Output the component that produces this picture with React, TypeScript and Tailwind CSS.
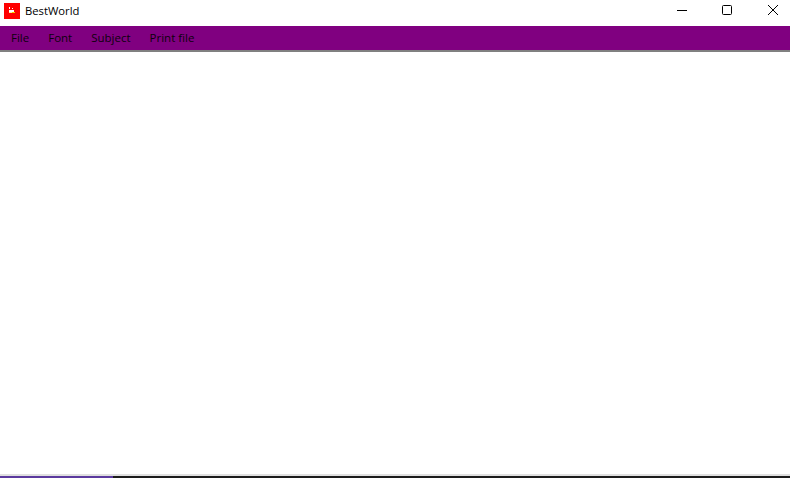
const menus = ["File", "Font", "Subject", "Print file"];

export default function App() {
  return (
    <div className="flex h-[478px] w-[790px] flex-col overflow-hidden bg-white font-['Open_Sans',sans-serif] text-black">
      {/* Title bar */}
      <div className="flex h-[26px] shrink-0 items-center justify-between">
        <div className="flex items-center gap-[5px] pb-[4px] pl-[4px]">
          <svg width="16" height="16" viewBox="0 0 16 16" className="block">
            <rect width="16" height="16" fill="#ff0000" />
            <rect x="5" y="4" width="1" height="2" fill="#fff" />
            <rect x="8" y="5" width="1" height="1" fill="#fff" />
            <rect x="5" y="7" width="5" height="2" fill="#fff" />
            <rect x="5" y="9" width="3" height="1" fill="#ffe9a0" />
            <rect x="8" y="9" width="3" height="1" fill="#f5d000" />
          </svg>
          <span className="text-[11.25px] leading-none">BestWorld</span>
        </div>
        <div className="flex pb-[6px]">
          <div className="flex w-[46px] justify-center">
            <svg width="10" height="10" viewBox="0 0 10 10" className="block">
              <path d="M0 5.5h10" stroke="#000" strokeWidth="1" />
            </svg>
          </div>
          <div className="flex w-[44px] justify-center">
            <svg width="10" height="10" viewBox="0 0 10 10" className="block">
              <rect x="0.5" y="0.5" width="9" height="9" rx="1" fill="none" stroke="#000" strokeWidth="1" />
            </svg>
          </div>
          <div className="flex w-[41px] justify-center pl-[7px]">
            <svg width="10" height="10" viewBox="0 0 10 10" className="block">
              <path d="M0 0l10 10M10 0l-10 10" stroke="#000" strokeWidth="1" />
            </svg>
          </div>
        </div>
      </div>

      {/* Menu bar */}
      <div className="flex h-[24px] shrink-0 items-center gap-[19px] bg-[#800080] pb-[1px] pl-[11px] text-[11.5px] text-[#0d000d]">
        {menus.map((m) => (
          <span key={m} className="leading-none">
            {m}
          </span>
        ))}
      </div>
      <div className="h-[2px] shrink-0 bg-[#808080]" />

      {/* Empty client area */}
      <div className="flex-1 bg-white" />

      {/* Window bottom edge and desktop behind it */}
      <div className="h-[2px] shrink-0 bg-[#e0e0e0]" />
      <div className="flex h-[2px] shrink-0">
        <div className="w-[113px] bg-[#5b3a9e]" />
        <div className="flex-1 bg-[#1c1c1c]" />
      </div>
    </div>
  );
}
